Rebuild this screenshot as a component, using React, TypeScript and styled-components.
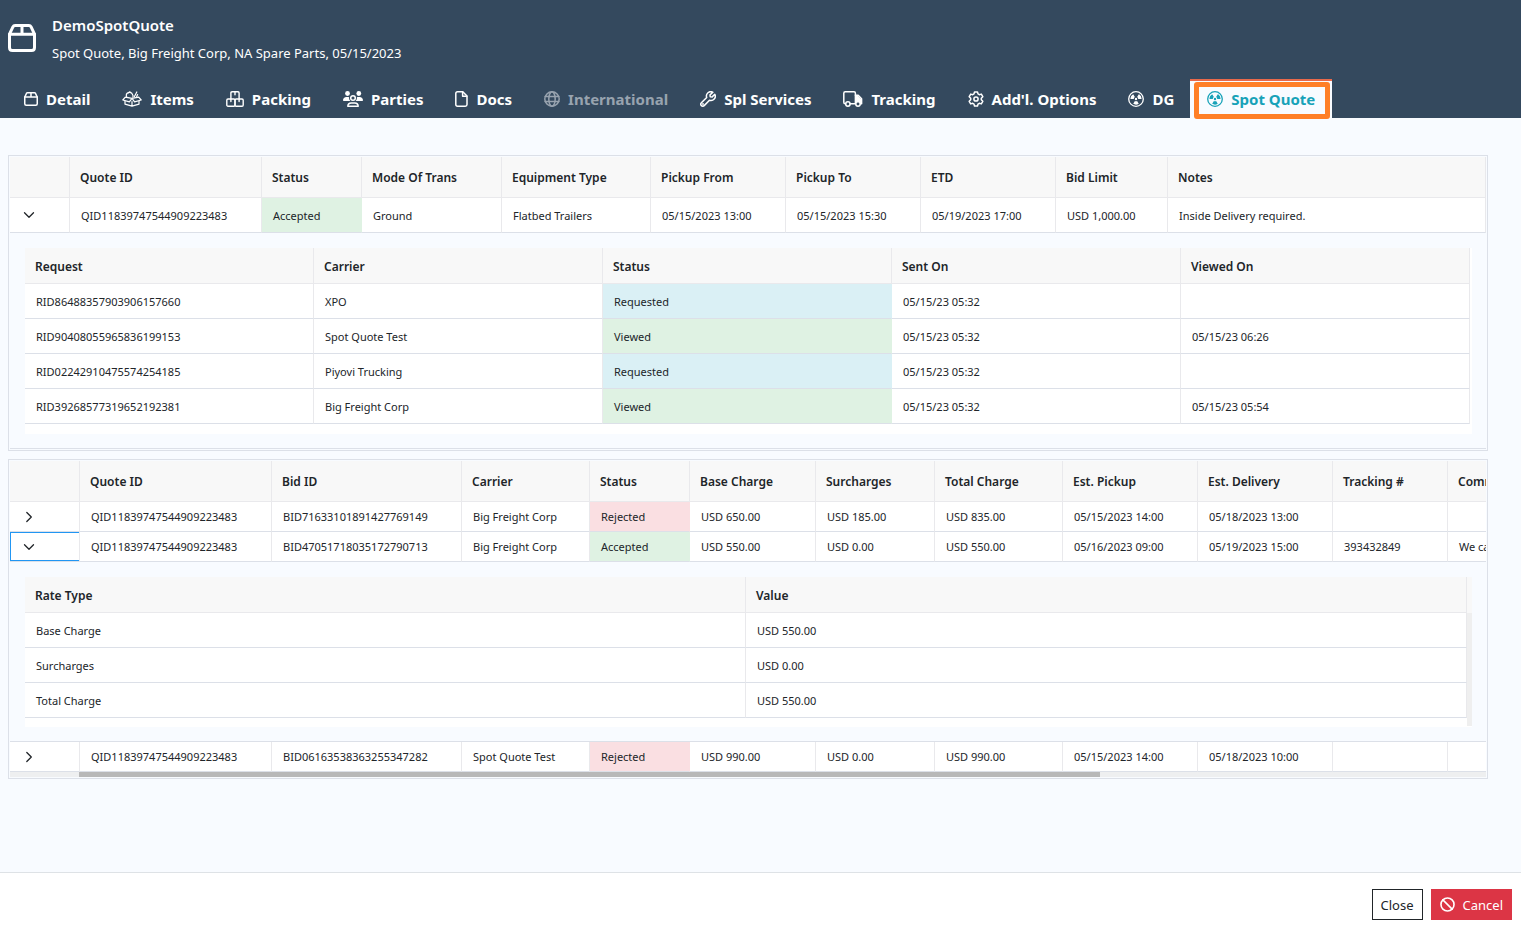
import React from 'react';
import styled, { createGlobalStyle, css } from 'styled-components';

const GlobalStyle = createGlobalStyle`
  *, *::before, *::after { box-sizing: border-box; }
  body {
    margin: 0;
    background: #ffffff;
    color: #212529;
    font-family: "Noto Sans", "Segoe UI", sans-serif;
    font-size: 11px;
  }
  button { font-family: inherit; cursor: pointer; }
`;

/* ---------- icons ---------- */

const LineIcon = styled.svg`
  display: block;
  flex: none;
  fill: none;
  stroke: currentColor;
  stroke-width: 1.5;
  stroke-linecap: round;
  stroke-linejoin: round;
`;

const BoxIcon = ({ size = 14 }: { size?: number }) => (
  <LineIcon width={size} height={size} viewBox="0 0 28 28">
    <g strokeWidth="3">
      <path d="M1.5 10.2 4.9 2.9Q5.6 1.5 7.1 1.5H20.9Q22.4 1.5 23.1 2.9L26.5 10.2V23.5Q26.5 26.5 23.5 26.5H4.5Q1.5 26.5 1.5 23.5Z" />
      <path d="M1.5 10.2H26.5M14 1.5V10.2" />
    </g>
  </LineIcon>
);

const ItemsIcon = () => (
  <LineIcon width="20" height="16" viewBox="0 0 20 16">
    <g strokeWidth="1.2">
      <path d="M3.3 6.2 10 7.3 16.7 6.2 19.2 9 12.6 10.8 10 7.3 7.4 10.8.8 9Z" />
      <path d="M3 10v3.2L10 15.2 17 13.2V10M10 10.5v4.5" />
      <path d="M4.6 5.6A3.1 3.1 0 0 1 10.4 3.4 3 3 0 0 1 10.9 6.2" />
      <path d="M6.4 1.8 8 .8M12.3 5.8 14.8 1M14.7 5.6 15.6 3.6" />
    </g>
  </LineIcon>
);

const PackingIcon = () => (
  <LineIcon width="18" height="16" viewBox="0 0 18 16">
    <g strokeWidth="1.4">
      <path d="M4.9 7.3V1.9Q4.9.8 6 .8h6Q13.1.8 13.1 1.9v5.4" />
      <rect x=".8" y="8" width="8.2" height="7.2" rx="1.2" />
      <rect x="9" y="8" width="8.2" height="7.2" rx="1.2" />
      <path d="M9 .8v2.9M4.9 8v2.6M13.1 8v2.6" />
    </g>
  </LineIcon>
);

const PartiesIcon = () => (
  <LineIcon width="20" height="16" viewBox="0 0 20 16">
    <g fill="currentColor" stroke="none">
      <circle cx="4.5" cy="2.5" r="2.4" />
      <circle cx="15.8" cy="2.5" r="2.4" />
      <path d="M0 9.3C0 7.3 1.5 6 3.3 6h1.5c.5 0 .9.1 1.3.3C5.9 7.9 6.5 9.2 7.4 10H.7C.3 10 0 9.7 0 9.3Z" />
      <path d="M20 9.3C20 7.3 18.5 6 16.7 6h-1.5c-.5 0-.9.1-1.3.3.2 1.6-.4 2.9-1.3 3.7h6.7c.4 0 .7-.3.7-.7Z" />
    </g>
    <circle cx="10" cy="7" r="2.3" />
    <path d="M4.8 15.2C4.9 13 6.3 11.9 8.2 11.9h3.6c1.900 0 3.300 1.100 3.400 3.300Z" />
  </LineIcon>
);

const DocIcon = () => (
  <LineIcon width="13" height="16" viewBox="0 0 13 16">
    <path d="M.8 2.5Q.8.8 2.5.8H7.8L12 5V13.5Q12 15.2 10.3 15.2H2.5Q.8 15.2.8 13.5Z" />
    <path d="M7.6 1V5.2H11.8" />
  </LineIcon>
);

const GlobeIcon = () => (
  <LineIcon width="16" height="16" viewBox="0 0 16 16">
    <circle cx="8" cy="8" r="7.2" />
    <ellipse cx="8" cy="8" rx="3.2" ry="7.2" />
    <path d="M1.2 5.500H14.800M1.200 10.500H14.800" />
  </LineIcon>
);

const WrenchIcon = () => (
  <LineIcon width="16" height="16" viewBox="0 0 16 16">
    <path d="M12.9 1.3A4.3 4.3 0 0 0 6.7 6.5L1.4 11.8A1.9 1.9 0 0 0 4.2 14.6L9.5 9.3A4.3 4.3 0 0 0 14.8 3.3L12.2 5.9 10.2 5.7 10 3.9Z" />
    <circle cx="3" cy="13" r=".3" />
  </LineIcon>
);

const TruckIcon = () => (
  <LineIcon width="20" height="16" viewBox="0 0 20 16">
    <path d="M2.6 12.8H2.2Q.8 12.8.8 11.3V2.2Q.8.8 2.2.8H11Q12.4.8 12.4 2.2V12.8H7.2" />
    <path d="M12.4 4.2H15.2L18.6 7.8V12.8H17.2" />
    <path d="M13 8.5V5H15.2L18.5 8.5V12H13Z" fill="currentColor" stroke="none" />
    <circle cx="4.9" cy="13" r="2.2" />
    <circle cx="15" cy="13" r="2.2" fill="#34495e" />
  </LineIcon>
);

const GearIcon = () => (
  <LineIcon width="16" height="16" viewBox="0 0 16 16">
    <path d="M6.5.9H9.5L10 2.9 11.3 3.7 13.3 3.1 14.8 5.7 13.3 7.2V8.8L14.8 10.3 13.3 12.9 11.3 12.3 10 13.1 9.5 15.1H6.5L6 13.1 4.7 12.3 2.7 12.9 1.2 10.3 2.7 8.8V7.2L1.2 5.7 2.7 3.1 4.7 3.7 6 2.9Z" />
    <circle cx="8" cy="8" r="2.1" />
  </LineIcon>
);

const blade = 'M6.9 6.1 5.2 3.15A5.6 5.6 0 0 0 2.4 7.6Q2.4 8 2.8 8H5.8A2.2 2.2 0 0 1 6.9 6.1Z';

const RadiationIcon = () => (
  <LineIcon width="16" height="16" viewBox="0 0 16 16">
    <circle cx="8" cy="8" r="7.3" strokeWidth="1.3" />
    <g fill="currentColor" stroke="none">
      <circle cx="8" cy="8" r="1.2" />
      <path d={blade} />
      <path d={blade} transform="rotate(120 8 8)" />
      <path d={blade} transform="rotate(240 8 8)" />
    </g>
  </LineIcon>
);

const BanIcon = () => (
  <LineIcon width="15" height="15" viewBox="0 0 14 14">
    <circle cx="7" cy="7" r="6.1" />
    <path d="M2.7 2.7 11.3 11.3" />
  </LineIcon>
);

const Chevron = ({ open }: { open?: boolean }) => (
  <LineIcon width="12" height="12" viewBox="0 0 12 12">
    <g strokeWidth="1.3">
      <path d={open ? 'M1.5 3.8 6 8.2 10.5 3.8' : 'M3.8 1.5 8.3 6 3.8 10.5'} />
    </g>
  </LineIcon>
);

/* ---------- page shell ---------- */

const Page = styled.div`
  display: flex;
  flex-direction: column;
  min-height: 100vh;
`;

const Header = styled.header`
  padding: 13px 8px 0;
  background: #34495e;
  color: #ffffff;
`;

const Brand = styled.div`
  display: flex;
  align-items: flex-start;
  gap: 16px;
  margin-bottom: 14px;
`;

const BrandMark = styled.div`
  padding-top: 11px;
`;

const Title = styled.h1`
  margin: 0;
  font-size: 15px;
  font-weight: 600;
  line-height: 24px;
`;

const Subtitle = styled.p`
  margin: 4px 0 0;
  font-size: 13px;
  line-height: 24px;
`;

const Tabs = styled.nav`
  display: flex;
`;

const Tab = styled.button<{ $active?: boolean }>`
  position: relative;
  display: flex;
  align-items: center;
  gap: 8px;
  height: 39px;
  padding: 0 16px 2px;
  border: 0;
  border-top: 2px solid transparent;
  background: none;
  color: #ffffff;
  font-size: 15px;
  font-weight: 700;
  white-space: nowrap;

  &:disabled { color: #98a3af; cursor: default; }

  ${(p) => p.$active && css`
    padding: 0 17px 2px;
    border-top-color: #e8694a;
    background: #f8fbff;
    color: #17a2b8;
  `}
`;

const Highlight = styled.span`
  position: absolute;
  inset: 1px 2px -1px 4px;
  border: 5px solid #ff7f27;
  border-radius: 3px;
  pointer-events: none;
`;

const Main = styled.main`
  flex: 1;
  display: flex;
  flex-direction: column;
  gap: 8px;
  padding: 37px 33px 40px 8px;
  background: #f8fbff;
`;

const Footer = styled.footer`
  display: flex;
  justify-content: flex-end;
  gap: 8px;
  padding: 16px 9px 12px;
  border-top: 1px solid #dee2e6;
`;

const ActionButton = styled.button<{ $danger?: boolean }>`
  display: flex;
  align-items: center;
  gap: 8px;
  height: 31px;
  padding: 0 8px;
  border: 1px solid ${(p) => (p.$danger ? '#dc3545' : '#212529')};
  background: ${(p) => (p.$danger ? '#dc3545' : '#ffffff')};
  color: ${(p) => (p.$danger ? '#ffffff' : '#212529')};
  font-size: 13px;
`;

/* ---------- grids ---------- */

const GridFrame = styled.section`
  overflow: hidden;
  padding: 1px;
  border: 1px solid #dce0e8;
`;

const Table = styled.table`
  width: 100%;
  table-layout: fixed;
  border-spacing: 0;
`;

const HeadCell = styled.th<{ $nested?: boolean; $open?: boolean }>`
  height: ${(p) => (p.$nested ? 36 : 41)}px;
  padding: ${(p) => (p.$nested ? 2 : 0)}px 0 0 10px;
  overflow: hidden;
  border-right: ${(p) => (p.$open ? 0 : 1)}px solid #e9e9ec;
  border-bottom: 1px solid #e9e9ec;
  background: #f8f8f8;
  font-size: 12px;
  font-weight: 600;
  text-align: left;
  white-space: nowrap;
`;

const tones = { green: '#dff2e3', blue: '#daf0f5', red: '#fadfe2' };
type Tone = keyof typeof tones;

const Cell = styled.td<{ $height?: number; $tone?: Tone; $open?: boolean; $focused?: boolean }>`
  height: ${(p) => p.$height ?? 35}px;
  padding: 0 0 0 11px;
  overflow: hidden;
  border-right: ${(p) => (p.$open ? 0 : 1)}px solid #e9e9ec;
  border-bottom: 1px solid #dce0e8;
  background: ${(p) => (p.$tone ? tones[p.$tone] : '#ffffff')};
  white-space: nowrap;
  ${(p) => p.$tone && css`border-right-color: ${tones[p.$tone]};`}
  ${(p) => p.$focused && css`
    box-shadow: inset 1px 1px #2196f3, inset 0 -1px #2196f3;
  `}
`;

const ExpandButton = styled.button`
  display: block;
  margin-left: 2px;
  padding: 0;
  border: 0;
  background: none;
  color: #212529;
`;

const DetailCell = styled.td`
  padding: 15px 14px 14px 15px;
  border-bottom: 1px solid #dce0e8;
  background: #f8fbff;
`;

const DetailPanel = styled.div<{ $bottom: number }>`
  display: flex;
  padding-bottom: ${(p) => p.$bottom}px;
  background: #ffffff;
`;

const PanelGutter = styled.div`
  flex: none;
  width: 2px;
`;

const VerticalTrack = styled.div`
  flex: none;
  width: 5px;
  margin-bottom: -8px;
  border-top: 36px solid #f8f8f8;
  background: #efefef;
`;

const ScrollTrack = styled.div`
  display: grid;
  grid-template-columns: 69px 1021fr 386fr;
  height: 5px;
  background: #eeeff0;
`;

const ScrollThumb = styled.div`
  grid-column: 2;
  background: #b8b8b8;
`;

/* ---------- data ---------- */

const tabs: { label: string; icon: React.ReactNode; disabled?: boolean; active?: boolean }[] = [
  { label: 'Detail', icon: <BoxIcon /> },
  { label: 'Items', icon: <ItemsIcon /> },
  { label: 'Packing', icon: <PackingIcon /> },
  { label: 'Parties', icon: <PartiesIcon /> },
  { label: 'Docs', icon: <DocIcon /> },
  { label: 'International', icon: <GlobeIcon />, disabled: true },
  { label: 'Spl Services', icon: <WrenchIcon /> },
  { label: 'Tracking', icon: <TruckIcon /> },
  { label: "Add'l. Options", icon: <GearIcon /> },
  { label: 'DG', icon: <RadiationIcon /> },
  { label: 'Spot Quote', icon: <RadiationIcon />, active: true },
];

const statusTone: Record<string, Tone> = {
  Accepted: 'green',
  Viewed: 'green',
  Requested: 'blue',
  Rejected: 'red',
};

const quoteColumns: [string, number?][] = [
  ['Quote ID', 192], ['Status', 100], ['Mode Of Trans', 140], ['Equipment Type', 149], ['Pickup From', 135],
  ['Pickup To', 135], ['ETD', 135], ['Bid Limit', 112], ['Notes'],
];
const quote = [
  'QID11839747544909223483', 'Accepted', 'Ground', 'Flatbed Trailers', '05/15/2023 13:00',
  '05/15/2023 15:30', '05/19/2023 17:00', 'USD 1,000.00', 'Inside Delivery required.',
];

const requestColumns = ['Request', 'Carrier', 'Status', 'Sent On', 'Viewed On'];
const requests = [
  ['RID86488357903906157660', 'XPO', 'Requested', '05/15/23 05:32', ''],
  ['RID90408055965836199153', 'Spot Quote Test', 'Viewed', '05/15/23 05:32', '05/15/23 06:26'],
  ['RID02242910475574254185', 'Piyovi Trucking', 'Requested', '05/15/23 05:32', ''],
  ['RID39268577319652192381', 'Big Freight Corp', 'Viewed', '05/15/23 05:32', '05/15/23 05:54'],
];

const bidColumns: [string, number?][] = [
  ['Quote ID', 192], ['Bid ID', 190], ['Carrier', 128], ['Status', 100], ['Base Charge', 126], ['Surcharges', 119],
  ['Total Charge', 128], ['Est. Pickup', 135], ['Est. Delivery', 135], ['Tracking #', 115], ['Comments'],
];
const bids = [
  ['QID11839747544909223483', 'BID71633101891427769149', 'Big Freight Corp', 'Rejected', 'USD 650.00', 'USD 185.00',
    'USD 835.00', '05/15/2023 14:00', '05/18/2023 13:00', '', ''],
  ['QID11839747544909223483', 'BID47051718035172790713', 'Big Freight Corp', 'Accepted', 'USD 550.00', 'USD 0.00',
    'USD 550.00', '05/16/2023 09:00', '05/19/2023 15:00', '393432849', 'We can'],
  ['QID11839747544909223483', 'BID06163538363255347282', 'Spot Quote Test', 'Rejected', 'USD 990.00', 'USD 0.00',
    'USD 990.00', '05/15/2023 14:00', '05/18/2023 10:00', '', ''],
];

const rates = [
  ['Base Charge', 'USD 550.00'],
  ['Surcharges', 'USD 0.00'],
  ['Total Charge', 'USD 550.00'],
];

/* ---------- grid pieces ---------- */

function GridHead({ first, columns, openEnd }: { first: number; columns: [string, number?][]; openEnd?: boolean }) {
  return (
    <>
      <colgroup>
        <col width={first} />
        {columns.map(([name, width]) => <col key={name} width={width} />)}
      </colgroup>
      <thead>
        <tr>
          <HeadCell as="td" />
          {columns.map(([name], i) => (
            <HeadCell key={name} scope="col" $open={openEnd && i === columns.length - 1}>{name}</HeadCell>
          ))}
        </tr>
      </thead>
    </>
  );
}

function DataCells({ values, height, openEnd }: { values: string[]; height?: number; openEnd?: boolean }) {
  return (
    <>
      {values.map((value, i) => (
        <Cell key={i} $height={height} $tone={statusTone[value]} $open={openEnd && i === values.length - 1}>{value}</Cell>
      ))}
    </>
  );
}

function NestedTable({ columns, rows }: { columns: string[]; rows: string[][] }) {
  return (
    <Table>
      <thead>
        <tr>{columns.map((name) => <HeadCell key={name} scope="col" $nested>{name}</HeadCell>)}</tr>
      </thead>
      <tbody>
        {rows.map((row) => <tr key={row[0]}><DataCells values={row} /></tr>)}
      </tbody>
    </Table>
  );
}

export default function App() {
  return (
    <Page>
      <GlobalStyle />
      <Header>
        <Brand>
          <BrandMark><BoxIcon size={28} /></BrandMark>
          <div>
            <Title>DemoSpotQuote</Title>
            <Subtitle>Spot Quote, Big Freight Corp, NA Spare Parts, 05/15/2023</Subtitle>
          </div>
        </Brand>
        <Tabs>
          {tabs.map((tab) => (
            <Tab key={tab.label} type="button" disabled={tab.disabled} $active={tab.active}>
              {tab.icon}
              {tab.label}
              {tab.active && <Highlight />}
            </Tab>
          ))}
        </Tabs>
      </Header>

      <Main>
        <GridFrame>
          <Table>
            <GridHead first={60} columns={quoteColumns} />
            <tbody>
              <tr>
                <Cell>
                  <ExpandButton type="button" aria-label="Collapse row"><Chevron open /></ExpandButton>
                </Cell>
                <DataCells values={quote} />
              </tr>
              <tr>
                <DetailCell colSpan={quoteColumns.length + 1}>
                  <DetailPanel $bottom={10}>
                    <NestedTable columns={requestColumns} rows={requests} />
                    <PanelGutter />
                  </DetailPanel>
                </DetailCell>
              </tr>
            </tbody>
          </Table>
        </GridFrame>

        <GridFrame>
          <Table>
            <GridHead first={70} columns={bidColumns} openEnd />
            <tbody>
              {bids.map((bid) => {
                const open = bid[3] === 'Accepted';
                return (
                  <React.Fragment key={bid[1]}>
                    <tr>
                      <Cell $height={30} $focused={open}>
                        <ExpandButton type="button" aria-label={open ? 'Collapse row' : 'Expand row'}>
                          <Chevron open={open} />
                        </ExpandButton>
                      </Cell>
                      <DataCells values={bid} height={30} openEnd />
                    </tr>
                    {open && (
                      <tr>
                        <DetailCell colSpan={bidColumns.length + 1}>
                          <DetailPanel $bottom={9}>
                            <NestedTable columns={['Rate Type', 'Value']} rows={rates} />
                            <VerticalTrack />
                          </DetailPanel>
                        </DetailCell>
                      </tr>
                    )}
                  </React.Fragment>
                );
              })}
            </tbody>
          </Table>
          <ScrollTrack><ScrollThumb /></ScrollTrack>
        </GridFrame>
      </Main>

      <Footer>
        <ActionButton type="button">Close</ActionButton>
        <ActionButton type="button" $danger><BanIcon />Cancel</ActionButton>
      </Footer>
    </Page>
  );
}
